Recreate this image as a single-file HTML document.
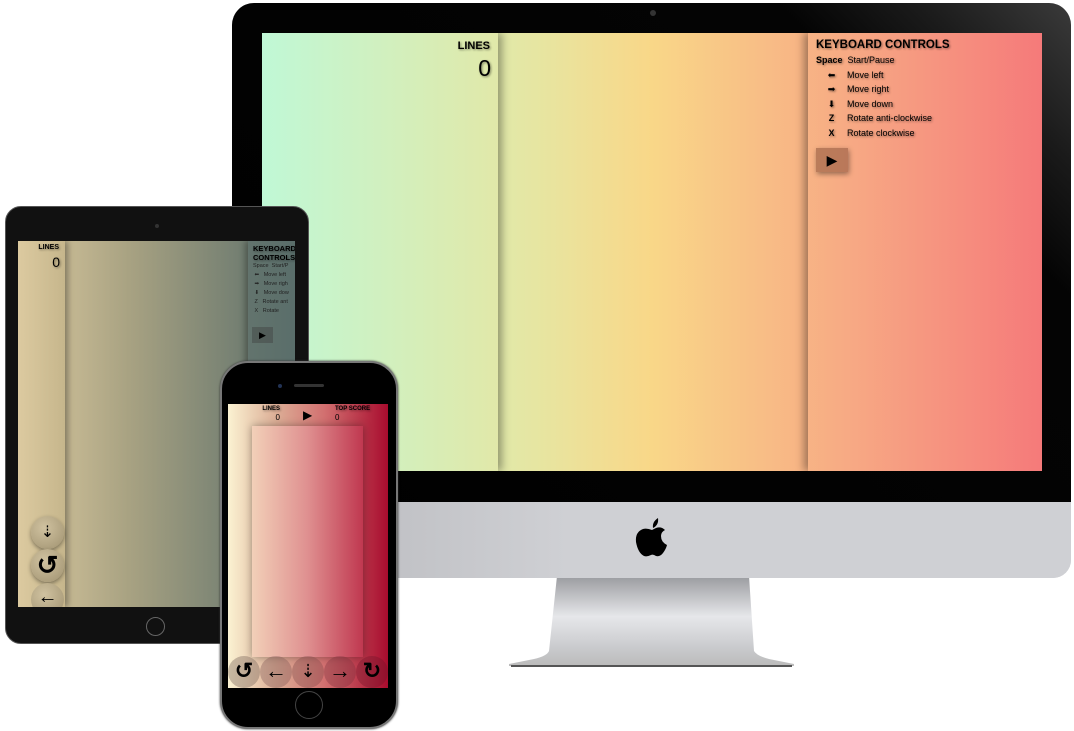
<!DOCTYPE html>
<html><head><meta charset="utf-8"><style>
*{margin:0;padding:0;box-sizing:border-box}
body{width:1074px;height:731px;background:#fff;position:relative;overflow:hidden;font-family:"Liberation Sans",sans-serif}
.a{position:absolute}
.sh{text-shadow:1px 1px 2px rgba(0,0,0,.45)}
</style></head><body>
<!-- iMac -->
<div class="a" style="left:509px;top:576px;width:285px;height:92px">
<svg width="285" height="92"><defs><linearGradient id="st" x1="0" y1="0" x2="0" y2="1"><stop offset="0" stop-color="#9a9b9f"/><stop offset=".45" stop-color="#e6e7ea"/><stop offset=".8" stop-color="#c9cacd"/><stop offset="1" stop-color="#bbb"/></linearGradient></defs>
<path d="M48 0 L240 0 L245 75 Q248 80 260 83 L285 88 L285 90 L0 90 L0 88 L25 83 Q38 80 40 75 Z" fill="url(#st)"/><rect x="2" y="89" width="281" height="2" fill="#555"/></svg></div>
<div class="a" style="left:232px;top:3px;width:839px;height:575px;border-radius:22px 22px 18px 18px;background:#cfd0d4;overflow:hidden">
<div class="a" style="left:0;top:0;width:839px;height:499px;background:linear-gradient(225deg,#3a3a3a 0,#1a1a1a 12%,#040404 22%,#000 100%)"></div>
<div class="a" style="left:418px;top:7px;width:6px;height:6px;border-radius:50%;background:#333"></div>
<div class="a" style="left:0;top:499px;width:839px;height:76px;background:linear-gradient(90deg,#b4b5b9,#cfd0d4 40%,#cfd0d4)"></div>
</div>
<svg class="a" style="left:634px;top:517px" width="36" height="40"><path d="M24 1 Q25 8 19 11 Q18 5 24 1Z M18 13 Q13 11 9 12 Q1 15 2 25 Q4 36 10 39 Q13 40 17 38 Q19 37 22 39 Q26 40 29 36 Q32 32 33 28 Q27 25 27 19 Q27 15 31 13 Q27 9 22 11 Z" fill="#000"/></svg>
<div class="a" style="left:262px;top:33px;width:780px;height:438px;background:linear-gradient(90deg,#c0f8d6 0%,#e6e6a2 35%,#f9d788 50%,#f7aa84 75%,#f57a7a 100%);overflow:hidden">
<div class="a" style="left:0;top:0;width:236px;height:438px;box-shadow:4px 0 8px rgba(0,0,0,.35)"></div>
<div class="a" style="left:546px;top:0;width:234px;height:438px;box-shadow:-4px 0 8px rgba(0,0,0,.35)"></div>
<div class="a sh" style="left:190px;top:7px;width:38px;text-align:right;font-size:11px;font-weight:bold">LINES</div>
<div class="a sh" style="left:190px;top:22px;width:39px;text-align:right;font-size:23px">0</div>
<div class="a sh" style="left:554px;top:6px;font-size:11.5px;font-weight:bold">KEYBOARD CONTROLS</div>
<div class="a sh" style="left:554px;top:20px;font-size:9px;line-height:14.6px">
<div><b>Space</b>&nbsp; Start/Pause</div>
<div><span style="display:inline-block;width:31px;text-align:center">⬅</span>Move left</div>
<div><span style="display:inline-block;width:31px;text-align:center">➡</span>Move right</div>
<div><span style="display:inline-block;width:31px;text-align:center">⬇</span>Move down</div>
<div><span style="display:inline-block;width:31px;text-align:center"><b>Z</b></span>Rotate anti-clockwise</div>
<div><span style="display:inline-block;width:31px;text-align:center"><b>X</b></span>Rotate clockwise</div></div>
<div class="a" style="left:554px;top:115px;width:32px;height:24px;background:rgba(110,60,40,.45);box-shadow:1px 2px 5px rgba(0,0,0,.4);font-size:14px;text-align:center;line-height:24px">▶</div>
</div>
<!-- iPad -->
<div class="a" style="left:5px;top:206px;width:304px;height:438px;border-radius:16px;background:#111;border:1px solid #555"></div>
<div class="a" style="left:155px;top:224px;width:4px;height:4px;border-radius:50%;background:#333"></div>
<div class="a" style="left:146px;top:617px;width:19px;height:19px;border-radius:50%;border:1px solid #666"></div>
<div class="a" style="left:18px;top:241px;width:277px;height:366px;background:linear-gradient(90deg,#dccaa0 0%,#a8a282 40%,#5a6e6a 100%);overflow:hidden">
<div class="a" style="left:0;top:0;width:47px;height:366px;background:linear-gradient(90deg,#dccaa0,#c6b68c);box-shadow:3px 0 6px rgba(0,0,0,.35)"></div>
<div class="a" style="left:230px;top:0;width:50px;height:366px;background:rgba(90,110,106,.6);box-shadow:-3px 0 6px rgba(0,0,0,.3)"></div>
<div class="a sh" style="left:10px;top:3px;width:31px;text-align:right;font-size:7px;font-weight:bold">LINES</div>
<div class="a sh" style="left:10px;top:13px;width:32px;text-align:right;font-size:14px">0</div>
<div class="a sh" style="left:235px;top:3px;font-size:7.5px;font-weight:bold;line-height:9px;white-space:nowrap">KEYBOARD<br>CONTROLS</div>
<div class="a" style="left:235px;top:21px;font-size:5.5px;line-height:9px;white-space:nowrap;color:#222">Space&nbsp; Start/P<br>&nbsp;⬅ &nbsp; Move left<br>&nbsp;➡ &nbsp; Move righ<br>&nbsp;⬇ &nbsp; Move dow<br>&nbsp;Z &nbsp; Rotate ant<br>&nbsp;X &nbsp; Rotate</div>
<div class="a" style="left:234px;top:86px;width:21px;height:16px;background:rgba(60,60,60,.4);font-size:9px;text-align:center;line-height:16px">▶</div>
<div class="a" style="left:13px;top:275px;width:33px;height:33px;border-radius:50%;background:radial-gradient(circle at 40% 35%,#d0c2a0,#a09270);box-shadow:0 2px 4px rgba(0,0,0,.4);text-align:center;font-size:16px;line-height:33px">⇣</div>
<div class="a" style="left:13px;top:308px;width:33px;height:33px;border-radius:50%;background:radial-gradient(circle at 40% 35%,#d0c2a0,#a09270);box-shadow:0 2px 4px rgba(0,0,0,.4);text-align:center;font-size:26px;font-weight:bold;line-height:33px">↺</div>
<div class="a" style="left:13px;top:342px;width:33px;height:33px;border-radius:50%;background:radial-gradient(circle at 40% 35%,#d0c2a0,#a09270);text-align:center;font-size:20px;line-height:28px">←</div>
</div>
<!-- iPhone -->
<div class="a" style="left:220px;top:361px;width:178px;height:368px;border-radius:28px;background:#000;border:2px solid #777;box-shadow:0 0 2px #333"></div>
<div class="a" style="left:278px;top:384px;width:4px;height:4px;border-radius:50%;background:#235"></div>
<div class="a" style="left:294px;top:384px;width:30px;height:3px;border-radius:2px;background:#333"></div>
<div class="a" style="left:295px;top:691px;width:28px;height:28px;border-radius:50%;border:1px solid #444"></div>
<div class="a" style="left:228px;top:404px;width:160px;height:284px;background:linear-gradient(90deg,#fbf2d2 0%,#dcae96 30%,#d27070 60%,#a80c2e 100%);overflow:hidden">
<div class="a" style="left:24px;top:22px;width:111px;height:231px;background:linear-gradient(90deg,#f2d0b8,#df9090 50%,#c03850);box-shadow:0 0 8px rgba(0,0,0,.35)"></div>
<div class="a sh" style="left:30px;top:2px;width:22px;text-align:right;font-size:6px;font-weight:bold">LINES</div>
<div class="a" style="left:30px;top:9px;width:22px;text-align:right;font-size:8px">0</div>
<div class="a" style="left:75px;top:4px;font-size:12px">▶</div>
<div class="a sh" style="left:107px;top:2px;font-size:6px;font-weight:bold">TOP SCORE</div>
<div class="a" style="left:107px;top:9px;font-size:8px">0</div>
<div class="a" style="left:0;top:252px;width:160px;height:32px;display:flex;justify-content:space-around;align-items:center;font-size:22px;font-weight:bold">
<span style="width:32px;height:32px;border-radius:50%;background:rgba(120,100,90,.4);text-align:center;line-height:30px">↺</span>
<span style="width:32px;height:32px;border-radius:50%;background:rgba(120,80,80,.35);text-align:center;line-height:30px">←</span>
<span style="width:32px;height:32px;border-radius:50%;background:rgba(120,70,70,.35);text-align:center;line-height:30px;font-weight:normal;font-size:18px">⇣</span>
<span style="width:32px;height:32px;border-radius:50%;background:rgba(120,50,60,.35);text-align:center;line-height:30px">→</span>
<span style="width:32px;height:32px;border-radius:50%;background:rgba(110,20,40,.35);text-align:center;line-height:30px">↻</span>
</div></div>
</body></html>
